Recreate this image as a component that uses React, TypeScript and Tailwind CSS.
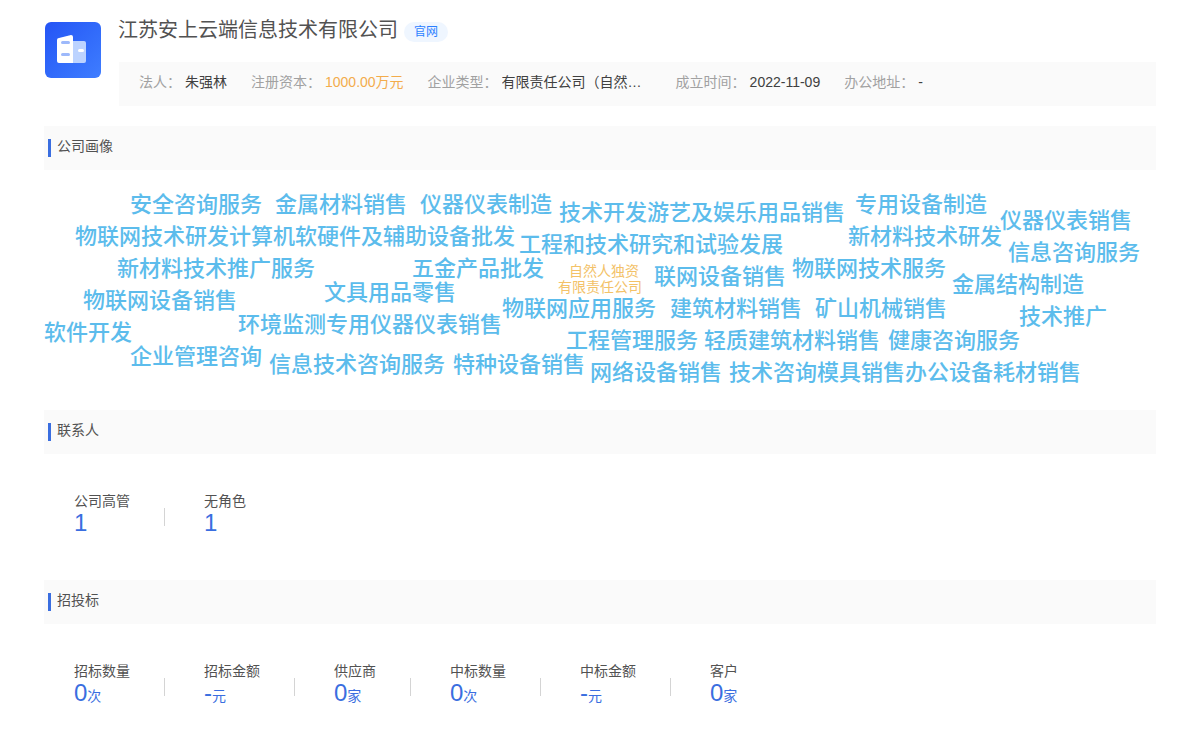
const words = [
  { text: '安全咨询服务', x: 130, y: 205 },
  { text: '金属材料销售', x: 275, y: 205 },
  { text: '仪器仪表制造', x: 420, y: 205 },
  { text: '技术开发游艺及娱乐用品销售', x: 559, y: 213 },
  { text: '专用设备制造', x: 855, y: 205 },
  { text: '仪器仪表销售', x: 1000, y: 221 },
  { text: '物联网技术研发计算机软硬件及辅助设备批发', x: 75, y: 237 },
  { text: '工程和技术研究和试验发展', x: 519, y: 245 },
  { text: '新材料技术研发', x: 848, y: 237 },
  { text: '信息咨询服务', x: 1008, y: 253 },
  { text: '新材料技术推广服务', x: 117, y: 269 },
  { text: '五金产品批发', x: 412, y: 269 },
  { text: '联网设备销售', x: 654, y: 277 },
  { text: '物联网技术服务', x: 792, y: 269 },
  { text: '金属结构制造', x: 952, y: 285 },
  { text: '物联网设备销售', x: 83, y: 301 },
  { text: '文具用品零售', x: 324, y: 293 },
  { text: '物联网应用服务', x: 502, y: 309 },
  { text: '建筑材料销售', x: 670, y: 309 },
  { text: '矿山机械销售', x: 815, y: 309 },
  { text: '技术推广', x: 1019, y: 317 },
  { text: '环境监测专用仪器仪表销售', x: 238, y: 325 },
  { text: '软件开发', x: 44, y: 333 },
  { text: '工程管理服务', x: 566, y: 341 },
  { text: '轻质建筑材料销售', x: 704, y: 341 },
  { text: '健康咨询服务', x: 888, y: 341 },
  { text: '企业管理咨询', x: 130, y: 357 },
  { text: '信息技术咨询服务', x: 269, y: 365 },
  { text: '特种设备销售', x: 453, y: 365 },
  { text: '网络设备销售', x: 590, y: 373 },
  { text: '技术咨询模具销售办公设备耗材销售', x: 729, y: 373 },
]

const smallWords = [
  { text: '自然人独资', x: 569, y: 271 },
  { text: '有限责任公司', x: 558, y: 287 },
]

const contactStats = [
  { label: '公司高管', value: '1', unit: '' },
  { label: '无角色', value: '1', unit: '' },
]

const bidStats = [
  { label: '招标数量', value: '0', unit: '次' },
  { label: '招标金额', value: '-', unit: '元' },
  { label: '供应商', value: '0', unit: '家' },
  { label: '中标数量', value: '0', unit: '次' },
  { label: '中标金额', value: '-', unit: '元' },
  { label: '客户', value: '0', unit: '家' },
]

// cloud box starts at y=170, x=44 on the page
const CLOUD_TOP = 170
const CLOUD_LEFT = 44

function Logo() {
  return (
    <div className="ml-px mt-1.5 h-14 w-14 shrink-0 rounded-md bg-gradient-to-br from-[#2554f5] to-[#3f7dff]">
      <svg viewBox="0 0 56 56" className="h-14 w-14">
        <path d="M28 19h11a2 2 0 0 1 2 2v18a2 2 0 0 1-2 2H28z" fill="#bcd3ff" />
        <path d="M14 16l12-3a2 2 0 0 1 2 2v26H14a2 2 0 0 1-2-2V18a2 2 0 0 1 2-2z" fill="#fff" />
        <rect x="16" y="19" width="9" height="3" rx="1.5" fill="#9db9fb" />
        <rect x="16" y="31" width="9" height="3" rx="1.5" fill="#9db9fb" />
        <rect x="33" y="27" width="6" height="3" rx="1.5" fill="#fff" />
      </svg>
    </div>
  )
}

function InfoItem({ label, value, className = '', truncate = false }: { label: string; value: string; className?: string; truncate?: boolean }) {
  return (
    <div className="flex items-center gap-1 leading-none">
      <span className="text-neutral-400">{label}：</span>
      <span className={`${truncate ? 'w-[150px] truncate py-0.5' : ''} ${className || 'text-neutral-700'}`}>{value}</span>
    </div>
  )
}

function SectionTitle({ title }: { title: string }) {
  return (
    <div className="flex h-11 items-center gap-1.5 bg-neutral-50 pb-1 pl-1">
      <span className="mt-1 h-4.5 w-[3px] bg-[#3a6ee0]" />
      <span className="text-sm text-neutral-600">{title}</span>
    </div>
  )
}

function Stats({ items }: { items: { label: string; value: string; unit: string }[] }) {
  return (
    <div className="flex pl-7.5 pt-9">
      {items.map((s, i) => (
        <div key={s.label} className="flex items-center">
          <div className="pt-px">
            <p className="h-5 text-sm leading-5 text-neutral-600">{s.label}</p>
            <p className="h-5 leading-5 text-[#3a6ee0]">
              <span className="text-2xl leading-none">{s.value}</span>
              {s.unit && <span className="text-sm leading-none">{s.unit}</span>}
            </p>
          </div>
          {i < items.length - 1 && <span className="ml-8.5 mr-[39px] mt-3 h-4.5 w-px bg-neutral-300" />}
        </div>
      ))}
    </div>
  )
}

export default function App() {
  return (
    <div className="min-h-screen bg-white px-11 pt-4 font-['Liberation_Sans','Noto_Sans_CJK_SC',sans-serif]">
      <div className="flex gap-4.5">
        <Logo />
        <div className="flex-1">
          <div className="flex h-7 items-center gap-1.5">
            <h1 className="-ml-px text-xl text-neutral-600">江苏安上云端信息技术有限公司</h1>
            <a className="mt-1 flex h-5 items-center rounded-full bg-blue-50 px-2.5 text-xs text-blue-500">官网</a>
          </div>
          <div className="mt-4.5 flex h-11 items-center gap-6 bg-neutral-50 pb-1 pl-5 text-sm">
            <InfoItem label="法人" value="朱强林" />
            <InfoItem label="注册资本" value="1000.00万元" className="text-[#f3ac4c]" />
            <InfoItem label="企业类型" value="有限责任公司（自然人独资）" truncate />
            <InfoItem label="成立时间" value="2022-11-09" />
            <InfoItem label="办公地址" value="-" />
          </div>
        </div>
      </div>

      <div className="mt-5">
        <SectionTitle title="公司画像" />
        <div className="relative h-60">
          {words.map(w => (
            <span
              key={w.text}
              className="absolute whitespace-nowrap text-[22px] font-medium leading-7 text-[#5cbcec]"
              style={{ left: w.x - CLOUD_LEFT, top: w.y - 14 - CLOUD_TOP }}
            >
              {w.text}
            </span>
          ))}
          {smallWords.map(w => (
            <span
              key={w.text}
              className="absolute whitespace-nowrap text-sm leading-4 text-[#f3c268]"
              style={{ left: w.x - CLOUD_LEFT, top: w.y - 8 - CLOUD_TOP }}
            >
              {w.text}
            </span>
          ))}
        </div>
      </div>

      <SectionTitle title="联系人" />
      <div className="h-[126px]">
        <Stats items={contactStats} />
      </div>

      <SectionTitle title="招投标" />
      <Stats items={bidStats} />
    </div>
  )
}
